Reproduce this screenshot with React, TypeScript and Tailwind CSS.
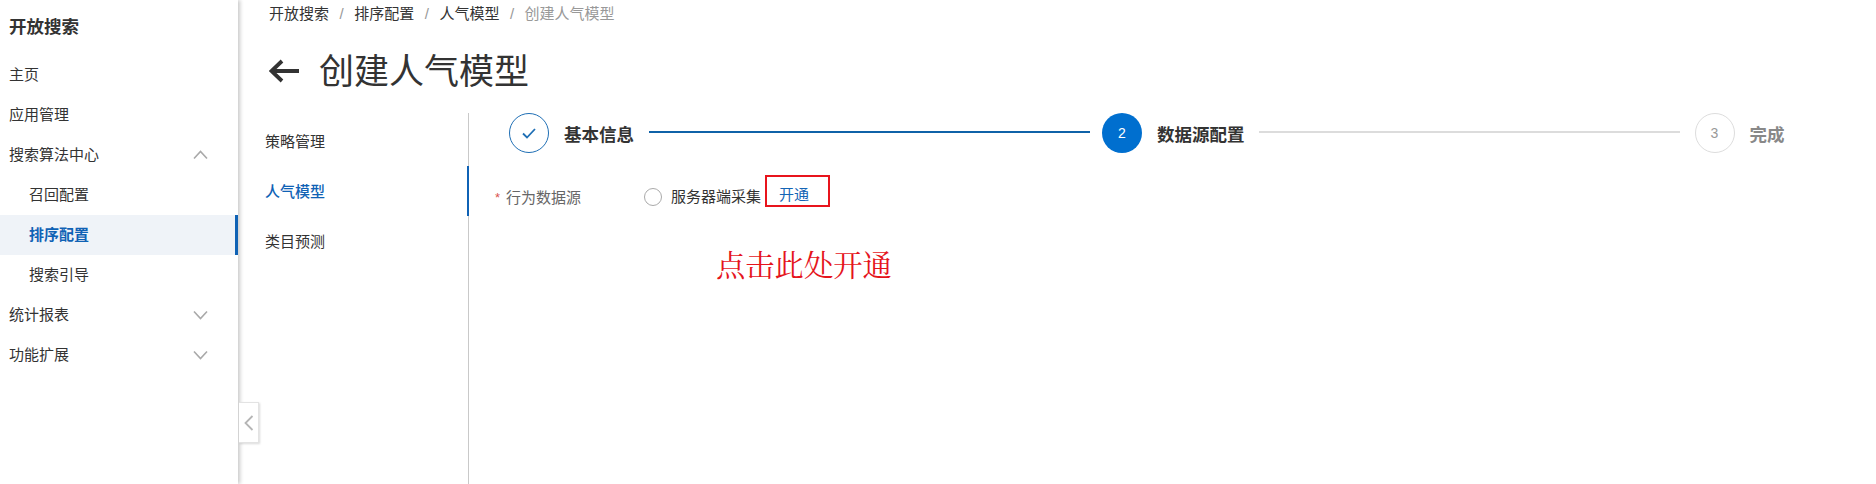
import React from "react";

const font = { fontFamily: '"Liberation Sans", "Noto Sans CJK SC", sans-serif' };

function Chevron({ up }: { up?: boolean }) {
  return (
    <svg width="15" height="10" viewBox="0 0 15 10" fill="none" stroke="#a9a9a9" strokeWidth="1.6" className="mr-[30px]">
      <path d={up ? "M1 8.5 L7.5 1.5 L14 8.5" : "M1 1.5 L7.5 8.5 L14 1.5"} />
    </svg>
  );
}

function NavItem({ label, sub, active, chevron }: { label: string; sub?: boolean; active?: boolean; chevron?: "up" | "down" }) {
  return (
    <div
      className={
        "h-10 flex items-center justify-between text-[15px] " +
        (sub ? "pl-[29px] " : "pl-[9px] ") +
        (active ? "bg-[#eff3f8] text-[#0f62b5] font-bold border-r-[3px] border-[#0f62b5]" : "text-[#333]")
      }
    >
      <span className="pt-[1px]">{label}</span>
      {chevron && <Chevron up={chevron === "up"} />}
    </div>
  );
}

function Circle({ children, kind }: { children: React.ReactNode; kind: "done" | "now" | "todo" }) {
  const cls =
    kind === "done"
      ? "border border-[#1f6fb5] bg-white"
      : kind === "now"
      ? "bg-[#006fcf] text-white"
      : "border border-[#dddddd] text-[#999] bg-white";
  return (
    <div className={"w-10 h-10 shrink-0 rounded-full flex items-center justify-center text-[14px] font-light " + cls}>
      {children}
    </div>
  );
}

export default function App() {
  return (
    <div className="relative flex w-[1876px] h-[484px] bg-white overflow-hidden" style={font}>
      <aside className="relative w-[238px] shrink-0 h-full bg-white shadow-[2px_0_4px_rgba(0,0,0,0.22)] pt-[7px]">
        <div className="h-10 flex items-center pl-[9px] text-[17.5px] font-bold text-[#333]">开放搜索</div>
        <div className="mt-[8px]">
          <NavItem label="主页" />
          <NavItem label="应用管理" />
          <NavItem label="搜索算法中心" chevron="up" />
          <NavItem label="召回配置" sub />
          <NavItem label="排序配置" sub active />
          <NavItem label="搜索引导" sub />
          <NavItem label="统计报表" chevron="down" />
          <NavItem label="功能扩展" chevron="down" />
        </div>
        <div className="absolute left-[239px] top-[402px] w-[20px] h-[41px] bg-white border border-l-0 border-[#e3e3e3] shadow-[1px_1px_2px_rgba(0,0,0,0.15)] flex items-center justify-center">
          <svg width="10" height="16" viewBox="0 0 10 16" fill="none" stroke="#b5b5b5" strokeWidth="1.8">
            <path d="M8.5 1 L1.5 8 L8.5 15" />
          </svg>
        </div>
      </aside>

      <main className="flex-1 min-w-0 flex flex-col">
        <div className="pl-[31px] h-[27px] flex items-center text-[15px] text-[#333] mt-[1px]">
          <span>开放搜索</span>
          <span className="mx-[10.5px] text-[#999]">/</span>
          <span>排序配置</span>
          <span className="mx-[10.5px] text-[#999]">/</span>
          <span>人气模型</span>
          <span className="mx-[10.5px] text-[#999]">/</span>
          <span className="text-[#999]">创建人气模型</span>
        </div>
        <div className="pl-[31px] mt-[17px] h-[52px] flex items-center text-[#333]">
          <svg width="31" height="24" viewBox="0 0 31 24" fill="none" stroke="#333" strokeWidth="3.8">
            <path d="M30 12 H3 M13 2 L2.5 12 L13 22" />
          </svg>
          <span className="ml-[19px] text-[35px] leading-none">创建人气模型</span>
        </div>

        <div className="flex flex-1 mt-[16px] min-h-0">
          <nav className="w-[231px] shrink-0 border-r border-[#c9c9c9] text-[15px] pt-[3px] h-full">
            <div className="h-[50px] flex items-center pl-[27px] pt-[2px] text-[#333]">策略管理</div>
            <div className="h-[50px] flex items-center pl-[27px] pt-[2px] text-[#0f62b5] font-medium border-r-2 border-[#0f62b5] -mr-px">人气模型</div>
            <div className="h-[50px] flex items-center pl-[27px] pt-[2px] text-[#333]">类目预测</div>
          </nav>

          <section className="flex-1 min-w-0">
            <div className="flex items-start h-10 pl-[40px]">
              <Circle kind="done">
                <svg width="14" height="11" viewBox="0 0 14 11" fill="none" stroke="#1f6fb5" strokeWidth="1.8">
                  <path d="M1 5.5 L5 9.5 L13 1" />
                </svg>
              </Circle>
              <span className="ml-[15px] h-10 pt-[4px] flex items-center text-[17.5px] font-bold text-[#333] shrink-0">基本信息</span>
              <div className="ml-[15px] mr-[12px] mt-[18px] w-[441px] h-[2px] bg-[#0f62a8]" />
              <Circle kind="now">2</Circle>
              <span className="ml-[15px] h-10 pt-[4px] flex items-center text-[17.5px] font-bold text-[#333] shrink-0">数据源配置</span>
              <div className="ml-[14px] mr-[15px] mt-[18px] w-[421px] h-[2px] bg-[#dcdcdc]" />
              <Circle kind="todo">3</Circle>
              <span className="ml-[15px] h-10 pt-[4px] flex items-center text-[17.5px] font-bold text-[#888] shrink-0">完成</span>
            </div>

            <div className="flex items-center h-[44px] mt-[22px] text-[15px]">
              <span className="ml-[26px] w-[11px] pt-[2px] text-[#d9534f] text-[13px]">*</span>
              <span className="text-[#666] w-[138px] pt-[2px]">行为数据源</span>
              <span className="w-[18px] h-[18px] rounded-full border border-[#aaaaaa] bg-white shrink-0" />
              <span className="ml-[9px] text-[#333]">服务器端采集</span>
              <span className="ml-[4px] self-start w-[65px] h-[32px] border-2 border-[#e8141c] text-[#1565b5] pl-[12px] pt-[8px] flex items-center">开通</span>
            </div>

            <div
              className="ml-[247px] mt-[26px] text-[29.3px] leading-[36px] text-[#e5141c]"
              style={{ fontFamily: '"Noto Serif CJK SC", "Noto Sans CJK SC", serif' }}
            >
              点击此处开通
            </div>
          </section>
        </div>
      </main>
    </div>
  );
}
